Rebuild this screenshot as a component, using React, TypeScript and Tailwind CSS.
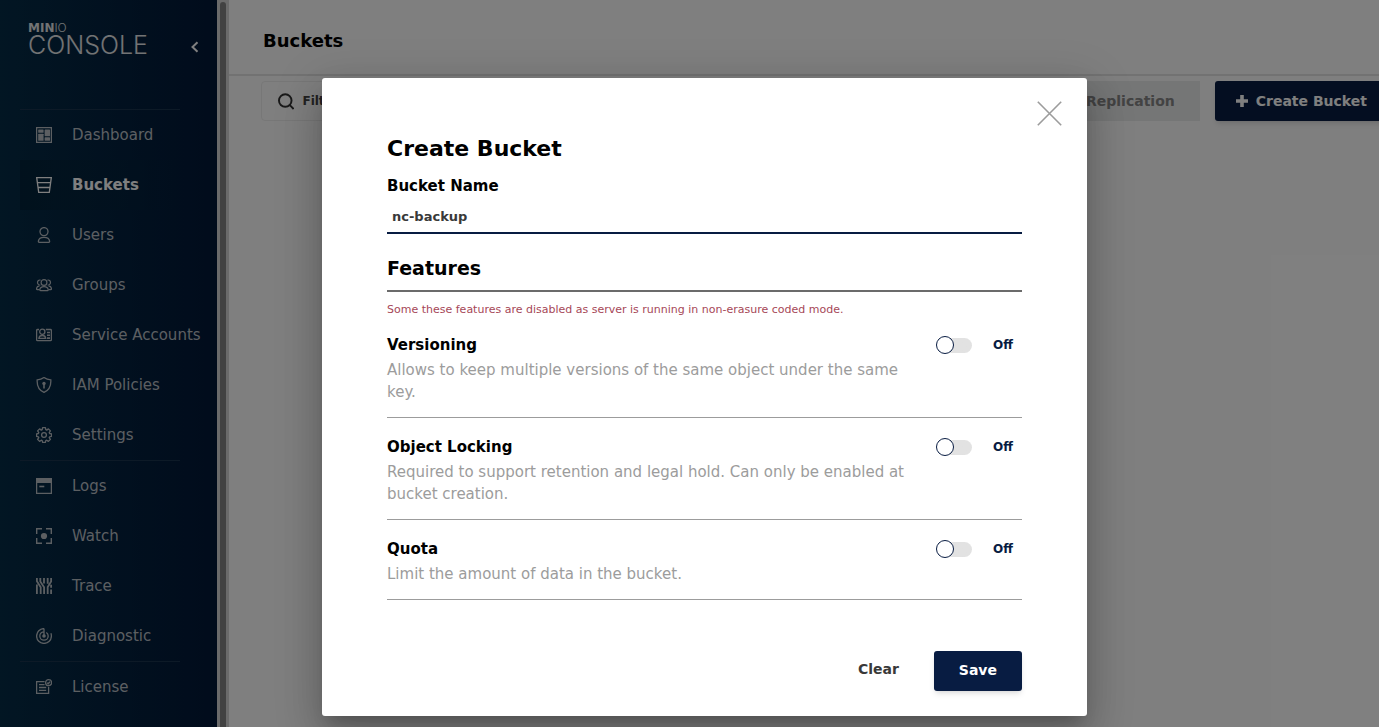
import React, { useState } from 'react';

type NavItem = { label: string; icon: React.ReactNode };

const Icon = ({ children }: { children: React.ReactNode }) => (
  <svg viewBox="0 0 16 16" className="h-4 w-4 shrink-0" fill="none" stroke="currentColor" strokeWidth="1.3" aria-hidden="true">
    {children}
  </svg>
);

const navGroups: NavItem[][] = [
  [
    {
      label: 'Dashboard',
      icon: (
        <Icon>
          <path d="M.6.6h14.8v14.8H.6z" />
          <g fill="currentColor" stroke="none">
            <rect x="2.2" y="2.4" width="5.4" height="3.4" rx=".5" />
            <rect x="2.2" y="6.8" width="5.4" height="7" rx=".5" />
            <rect x="8.6" y="2.4" width="5.4" height="6.8" rx=".5" />
            <rect x="8.6" y="10.2" width="5.4" height="3.6" rx=".5" />
          </g>
        </Icon>
      ),
    },
    {
      label: 'Buckets',
      icon: (
        <Icon>
          <path d="M.7.7h14.6l-2 14.6H2.7zM1.3 5.6h13.4M2 10.5h12" />
        </Icon>
      ),
    },
    {
      label: 'Users',
      icon: (
        <Icon>
          <circle cx="8" cy="4.6" r="4" />
          <path d="M2.4 14c.3-2.3 2.6-3.7 5.6-3.7s5.3 1.4 5.6 3.7c.1.9-.3 1.4-1.2 1.4H3.6c-.9 0-1.3-.5-1.2-1.4z" />
        </Icon>
      ),
    },
    {
      label: 'Groups',
      icon: (
        <Icon>
          <g strokeWidth="1.2">
            <circle cx="8" cy="5.5" r="2.9" />
            <path d="M3.8 12.8c.2-2 2-3.200 4.200-3.200s4 1.200 4.200 3.200c0 .6-.2.900-.8.900H4.600c-.6 0-.8-.3-.8-.9z" />
            <path d="M4.600 3.200C2.900 2.500 1.500 3.900 1.500 5.500c0 1.400 1.200 2.700 2.900 2.500M11.400 3.200c1.700-.7 3.100.7 3.100 2.300 0 1.400-1.200 2.700-2.900 2.500M3.500 8.900C1.700 9.100.6 10.300.5 11.900c0 .5.200.8.800.8h2.200M12.500 8.900c1.800.2 2.900 1.400 3 3 0 .5-.2.8-.8.8h-2.200" />
          </g>
        </Icon>
      ),
    },
    {
      label: 'Service Accounts',
      icon: (
        <Icon>
          <path d="M3 2.500H1.600a1 1 0 0 0-1 1v9.200a1 1 0 0 0 1 1h12.800a1 1 0 0 0 1-1V3.500a1 1 0 0 0-1-1H9.800" />
          <circle cx="6.300" cy="4.700" r="2.600" />
          <path d="M2.900 11.400c.2-1.900 1.500-2.900 3.400-2.900s3.200 1 3.400 2.900z" />
          <path d="M11 5.500h3M11 8.300h3M11 11.100h3" strokeWidth="1.600" />
        </Icon>
      ),
    },
    {
      label: 'IAM Policies',
      icon: (
        <Icon>
          <path d="M8 .6c2 1.500 4.400 2.200 6.800 2.200.4 6-1.400 10.300-6.800 12.600C2.600 13.100.8 8.800 1.200 2.800 3.600 2.800 6 2.100 8 .6z" />
          <circle cx="8" cy="6.400" r="1.700" fill="currentColor" stroke="none" />
          <path d="M8 6.500v5" strokeWidth="1.600" />
        </Icon>
      ),
    },
    {
      label: 'Settings',
      icon: (
        <Icon>
          <circle cx="8" cy="8" r="2.400" />
          <path
            strokeLinejoin="round"
            d="M6.600.7h2.800l.4 2 .9.400 1.700-1.200 2 2-1.200 1.700.4.900 1.900.3v2.600l-1.900.4-.4.900 1.200 1.700-2 2-1.700-1.200-.9.400-.4 1.800H6.600l-.4-1.800-.9-.4-1.700 1.200-2-2 1.200-1.700-.4-.9-1.800-.4V6.800l1.800-.3.4-.9-1.200-1.700 2-2 1.700 1.200.9-.4z"
          />
        </Icon>
      ),
    },
  ],
  [
    {
      label: 'Logs',
      icon: (
        <Icon>
          <path d="M.6.6h14.800v14.800H.6z" />
          <path d="M0 0h16v5H0z" fill="currentColor" stroke="none" />
          <path d="M3.300 8.500h5" strokeWidth="1.600" />
        </Icon>
      ),
    },
    {
      label: 'Watch',
      icon: (
        <Icon>
          <path d="M.7 6V.7H6M10 .7h5.300V6M15.300 10v5.300H10M6 15.300H.7V10" strokeWidth="1.400" />
          <circle cx="8" cy="8" r="3.100" fill="currentColor" stroke="none" />
        </Icon>
      ),
    },
    {
      label: 'Trace',
      icon: (
        <Icon>
          <g strokeWidth="1.800">
            <path d="M.9 0v3.200l3.800 6V16M4.300 0v3.500l3.800 5.800V16M.9 6.500V16M8 0v5.500M11.700 0v5.800M15.100 0v3.400L11.700 9v7M15.100 6.800v3M15.100 11.500V16" />
          </g>
        </Icon>
      ),
    },
    {
      label: 'Diagnostic',
      icon: (
        <Icon>
          <path d="M8 .4v7.600M8 .6a7.400 7.400 0 1 0 7.400 7.400c0-1-.2-1.900-.5-2.700M8 3.800A4.200 4.200 0 1 0 12.200 8c0-1.500-.8-2.800-1.900-3.500" />
          <circle cx="8" cy="8" r="1.800" fill="currentColor" stroke="none" />
        </Icon>
      ),
    },
  ],
  [
    {
      label: 'License',
      icon: (
        <Icon>
          <path d="M8.600 2.600H.6v11.800h12V7.800" />
          <path d="M3 5.700h5.500M3 8.500h7.200M3 11.300h7.200" />
          <circle cx="12.600" cy="3.700" r="3" />
          <path d="M11.200 3.700l1 1.100 1.800-2" />
        </Icon>
      ),
    },
  ],
];

function Sidebar() {
  const [current, setCurrent] = useState('Buckets');

  return (
    <aside className="flex shrink-0">
      <div className="w-[217px] bg-gradient-to-r from-[#042c47] to-[#031838] pl-5">
        <div className="flex h-[109px] items-start justify-between pt-[22px] pr-[15px] pl-2">
          <div className="text-[#e4e6e8]">
            <div className="text-[12px] leading-3">
              <span className="font-bold">MIN</span>
              <span className="font-[Inter,sans-serif] font-light">IO</span>
            </div>
            <div className="font-[Inter,sans-serif] text-[25px] leading-[22px] font-light">CONSOLE</div>
          </div>
          <button type="button" aria-label="Collapse menu" className="mt-[18px] text-white">
            <svg viewBox="0 0 14 14" className="h-3.5 w-3.5" fill="none" stroke="currentColor" strokeWidth="2">
              <path d="M9.500 2.200 4.500 7l5 4.800" />
            </svg>
          </button>
        </div>
        <nav>
          {navGroups.map((group, i) => (
            <ul key={i} className="before:block before:h-px before:w-40 before:bg-[#1a354e]">
              {group.map((item) => (
                <li key={item.label}>
                  <button
                    type="button"
                    onClick={() => setCurrent(item.label)}
                    className={`flex h-[50px] w-full items-center gap-5 pl-4 text-[15px] ${
                      current === item.label
                        ? 'bg-gradient-to-r from-[#03233a] to-transparent to-80% font-bold text-white'
                        : 'text-[#b9bfc5]'
                    }`}
                  >
                    {item.icon}
                    <span className="whitespace-nowrap">{item.label}</span>
                  </button>
                </li>
              ))}
            </ul>
          ))}
        </nav>
      </div>
      {/* scrollbar track */}
      <div className="w-3 bg-[#d6d6d6] px-[3px] pt-0.5">
        <div className="h-full rounded-t-full bg-[#858585]" />
      </div>
    </aside>
  );
}

function BucketsPage() {
  return (
    <main className="min-w-0 flex-1 bg-white">
      <header className="flex h-[76px] items-center border-b-2 border-[#e4e4e4] pb-1 pl-[34px]">
        <h1 className="pt-2.5 text-[18px] font-bold text-black">Buckets</h1>
      </header>
      <div className="flex items-center gap-[15px] pt-[5px] pr-[17px] pl-8">
        <label className="flex h-10 flex-1 items-center gap-2 rounded border border-[#eeeeee] pl-4 text-[#333]">
          <svg viewBox="0 0 17 17" className="h-[17px] w-[17px]" fill="none" stroke="currentColor" strokeWidth="2" aria-hidden="true">
            <circle cx="7.500" cy="7.500" r="6.500" />
            <path d="m12 12 4.200 4.200" />
          </svg>
          <input type="text" aria-label="Filter Buckets" placeholder="Filter Buckets" className="w-full text-[12px] font-bold outline-none placeholder:text-[#444]" />
        </label>
        <button type="button" disabled className="h-10 bg-[#ebeced] px-[25px] text-[14px] font-bold text-[#868686]">
          Set Replication
        </button>
        <button type="button" className="flex h-10 items-center gap-2 rounded-[3px] bg-[#081c42] pr-[25px] pl-[21px] text-[14px] font-bold text-white shadow-md">
          <svg viewBox="0 0 12 12" className="h-3 w-3" fill="none" stroke="currentColor" strokeWidth="3.600" aria-hidden="true">
            <path d="M6 0v12M0 6h12" />
          </svg>
          Create Bucket
        </button>
      </div>
    </main>
  );
}

type FeatureProps = { id: string; title: string; description: string };

function Feature({ id, title, description }: FeatureProps) {
  const [enabled, setEnabled] = useState(false);

  return (
    <div className="flex border-b border-[#9c9c9c] pt-[18px] pb-3.5">
      <div className="flex-1">
        <label htmlFor={id} className="block text-[15px] leading-[22px] font-bold text-black">
          {title}
        </label>
        <p className="mt-[3px] text-[15px] leading-[22px] text-[#9c9c9c]">{description}</p>
      </div>
      <label htmlFor={id} className="flex h-[22px] w-[105px] cursor-pointer items-center gap-[21px] pl-[19px]">
        <input id={id} type="checkbox" className="peer sr-only" checked={enabled} onChange={(e) => setEnabled(e.target.checked)} />
        <span className="flex h-[15px] w-9 items-center rounded-full bg-gradient-to-r from-transparent from-20% to-[#e2e2e2] to-20% peer-checked:justify-end">
          <span className="h-[18px] w-[18px] shrink-0 rounded-full border border-[#081c42] bg-white" />
        </span>
        <span className="text-[12px] font-bold text-[#081c42]">{enabled ? 'On' : 'Off'}</span>
      </label>
    </div>
  );
}

function CreateBucketDialog() {
  const [name, setName] = useState('nc-backup');

  return (
    <div
      role="dialog"
      aria-labelledby="dialog-title"
      className="relative w-[765px] rounded-[3px] bg-white px-[65px] pt-14 pb-[25px] shadow-[0_11px_15px_-7px_rgba(0,0,0,0.2),0_24px_38px_3px_rgba(0,0,0,0.14),0_9px_46px_8px_rgba(0,0,0,0.12)]"
    >
      <button type="button" aria-label="Close" className="absolute top-[23px] right-[25px] text-[#9c9c9c]">
        <svg viewBox="0 0 25 25" className="h-[25px] w-[25px]" fill="none" stroke="currentColor" strokeWidth="1.600">
          <path d="M.8.8l23.400 23.400M24.200.8.8 24.200" />
        </svg>
      </button>

      <h2 id="dialog-title" className="text-[22px] leading-[30px] font-bold text-black">
        Create Bucket
      </h2>
      <form onSubmit={(e) => e.preventDefault()}>
        <label htmlFor="bucket-name" className="mt-[11px] block text-[15px] leading-[22px] font-bold text-black">
          Bucket Name
        </label>
        <input
          id="bucket-name"
          type="text"
          value={name}
          onChange={(e) => setName(e.target.value)}
          className="block h-[37px] w-full border-b-2 border-[#081c42] px-[5px] pt-[3px] text-[13px] font-bold text-[#393939] outline-none"
        />

        <h3 className="mt-5 border-b-2 border-[#6b6b6b] pb-2 text-[19px] leading-7 font-bold text-black">Features</h3>
        <p className="mt-2.5 text-[11px] leading-4 text-[#a64757]">
          Some these features are disabled as server is running in non-erasure coded mode.
        </p>

        <div className="-mt-0.5">
          <Feature id="versioning" title="Versioning" description="Allows to keep multiple versions of the same object under the same key." />
          <Feature
            id="locking"
            title="Object Locking"
            description="Required to support retention and legal hold. Can only be enabled at bucket creation."
          />
          <Feature id="quota" title="Quota" description="Limit the amount of data in the bucket." />
        </div>

        <div className="mt-[51px] flex justify-end gap-2.5">
          <button type="button" onClick={() => setName('')} className="h-10 px-[25px] pb-1 text-[14px] font-bold text-[#393939]">
            Clear
          </button>
          <button type="submit" className="h-10 rounded-[3px] bg-[#081c42] px-[25px] pb-0.5 text-[14px] font-bold text-white shadow-md">
            Save
          </button>
        </div>
      </form>
    </div>
  );
}

export default function App() {
  return (
    <div className="h-screen overflow-hidden font-['DejaVu_Sans',sans-serif]">
      {/* the console runs a little past the right edge of the window */}
      <div className="relative -mr-[30px] flex h-full">
        <Sidebar />
        <BucketsPage />
        <div className="absolute inset-0 flex items-start justify-center bg-black/50 pt-[78px]">
          <CreateBucketDialog />
        </div>
      </div>
    </div>
  );
}
